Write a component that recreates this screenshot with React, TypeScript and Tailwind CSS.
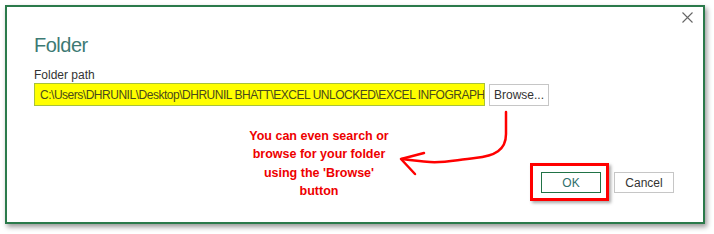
import React from "react";

const PATH_VALUE =
  "C:\\Users\\DHRUNIL\\Desktop\\DHRUNIL BHATT\\EXCEL UNLOCKED\\EXCEL INFOGRAPH";

function CloseIcon() {
  return (
    <svg width="11" height="11" viewBox="0 0 11 11" fill="none">
      <path d="M0.5 0.5 L10.5 10.5 M10.5 0.5 L0.5 10.5" stroke="#666666" strokeWidth="1.1" />
    </svg>
  );
}

function Annotation() {
  return (
    <svg
      className="absolute inset-0 pointer-events-none"
      width="714"
      height="234"
      viewBox="0 0 714 234"
      fill="none"
    >
      <path
        d="M506 112 L506 134 C506 150 495 156 475 158 C455 160 445 163 430 162 C418 161 410 160 402 159"
        stroke="#ff0000"
        strokeWidth="2.5"
        strokeLinecap="round"
        strokeLinejoin="round"
      />
      <path
        d="M424 153 L401 159 L415 174"
        stroke="#ff0000"
        strokeWidth="2.5"
        strokeLinecap="round"
        strokeLinejoin="round"
      />
    </svg>
  );
}

export default function App() {
  return (
    <div className="relative w-[714px] h-[234px] bg-white pt-[5px] pl-[5px] font-['Liberation_Sans',Arial,sans-serif] overflow-hidden">
      <div className="w-[700px] h-[219px] border-2 border-[#2b7a4b] bg-white shadow-[2px_3px_5px_rgba(0,0,0,0.4)] flex flex-col">
        <div className="h-[20px] flex justify-end items-center pr-[10px]">
          <CloseIcon />
        </div>

        <div className="pl-[27px]">
          <div className="mt-[6px] h-[24px] leading-[24px] text-[20px] tracking-[-0.5px] text-[#3d7a74]">
            Folder
          </div>
          <div className="mt-[10px] h-[16px] leading-[16px] text-[12px] text-[#333333]">
            Folder path
          </div>

          <div className="flex items-start h-[23px]">
            <div className="w-[451px] h-[23px] bg-[#ffff00] border border-[#a8c23a] pl-[5px] flex items-center overflow-hidden">
              <span className="block w-[444px] overflow-hidden whitespace-nowrap text-[12px] tracking-[-0.48px] text-[#4a4a1c]">
                {PATH_VALUE}
              </span>
            </div>
            <button className="ml-[4px] mt-[1px] w-[60px] h-[22px] bg-white border border-[#c6c6c6] text-[12px] text-[#333333] flex items-center justify-center">
              Browse...
            </button>
          </div>

          <div className="flex items-start">
            <div className="ml-[210px] mt-[21px] w-[150px] text-center text-[12.5px] leading-[18.3px] font-bold text-[#ee0000]">
              <div>You can even search or</div>
              <div>browse for your folder</div>
              <div>using the 'Browse'</div>
              <div>button</div>
            </div>

            <div className="ml-[136px] mt-[57px] border-[3px] border-[#ff0000] pl-[8px] pt-[6px] pr-[5px] pb-[5px] shadow-[2px_2px_3px_rgba(0,0,0,0.35)]">
              <button className="w-[60px] h-[21px] bg-white border border-[#217346] text-[12px] text-[#2f6f6c] flex items-center justify-center">
                OK
              </button>
            </div>

            <button className="ml-[5px] mt-[66px] w-[60px] h-[21px] bg-white border border-[#c6c6c6] text-[12px] text-[#333333] flex items-center justify-center">
              Cancel
            </button>
          </div>
        </div>
      </div>
      <Annotation />
    </div>
  );
}
